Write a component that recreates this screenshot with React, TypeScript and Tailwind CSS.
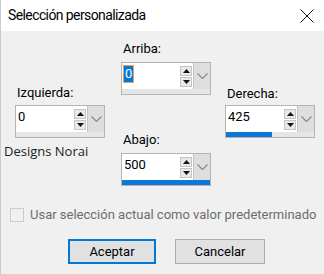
import React from 'react';

type SpinProps = {
  value: string;
  fill: number;
  selected?: boolean;
};

function SpinCombo({ value, fill, selected }: SpinProps) {
  return (
    <div className="w-[90px] h-[33px] border border-[#b4b4b4] bg-white flex flex-col">
      <div className="flex flex-1">
        <div className="flex-1 flex items-start pl-[2px] pt-[3px] text-[13px] leading-[16px] text-black">
          {selected ? (
            <span className="bg-[#0078d7] text-white outline outline-1 outline-[#e8a060] px-[1px]">{value}</span>
          ) : (
            <span>{value}</span>
          )}
        </div>
        <div className="flex flex-col justify-center gap-[1px] mr-[1px]">
          <div className="w-[12px] h-[10px] border border-[#c4c4c4] bg-[#e9e9e9] flex items-center justify-center">
            <svg width="7" height="4" viewBox="0 0 7 4">
              <path d="M0 4 L3.5 0 L7 4 Z" fill="#111" />
            </svg>
          </div>
          <div className="w-[12px] h-[10px] border border-[#c4c4c4] bg-[#e9e9e9] flex items-center justify-center">
            <svg width="7" height="4" viewBox="0 0 7 4">
              <path d="M0 0 L3.5 4 L7 0 Z" fill="#111" />
            </svg>
          </div>
        </div>
        <div className="w-[17px] bg-[#dedede] border-l border-[#c4c4c4] flex items-center justify-center">
          <svg width="11" height="6" viewBox="0 0 11 6">
            <path d="M0.5 0.5 L5.5 5.5 L10.5 0.5" stroke="#8a8a8a" strokeWidth="1.2" fill="none" />
          </svg>
        </div>
      </div>
      <div className="h-[5px] bg-[#e6e6e6]">
        <div className="h-full bg-[#0a78d4]" style={{ width: `${fill}%` }} />
      </div>
    </div>
  );
}

function Label({ children }: { children: React.ReactNode }) {
  return <div className="h-[16px] text-[13px] leading-[16px] text-black pl-[2px]">{children}</div>;
}

export default function App() {
  return (
    <div
      className="w-[324px] h-[274px] bg-[#f0f0f0] border-l border-[#c9c9d3] flex flex-col overflow-hidden"
      style={{ fontFamily: 'Roboto, "Liberation Sans", sans-serif' }}
    >
      <div className="h-[31px] bg-white flex items-center justify-between pl-[7px] pr-[10px]">
        <span className="text-[14px] text-black tracking-[-0.6px]">Selección personalizada</span>
        <svg width="14" height="14" viewBox="0 0 14 14">
          <path d="M0.5 0.5 L13.5 13.5 M13.5 0.5 L0.5 13.5" stroke="#111" strokeWidth="1" />
        </svg>
      </div>

      <div className="flex pl-[14px]">
        <div className="flex flex-col pt-[54px] w-[90px]">
          <Label>Izquierda:</Label>
          <div className="mt-[4px]">
            <SpinCombo value="0" fill={0} />
          </div>
          <div
            className="-ml-[11px] mt-[5px] text-[13px] leading-[16px] text-[#222] whitespace-nowrap"
            style={{ fontFamily: '"Open Sans", sans-serif' }}
          >
            Designs Norai
          </div>
        </div>
        <div className="flex flex-col pt-[10px] w-[90px] ml-[16px]">
          <Label>Arriba:</Label>
          <div className="mt-[5px]">
            <SpinCombo value="0" fill={0} selected />
          </div>
          <div className="mt-[37px]">
            <Label>Abajo:</Label>
          </div>
          <div className="mt-[5px]">
            <SpinCombo value="500" fill={100} />
          </div>
        </div>
        <div className="flex flex-col pt-[55px] w-[90px] ml-[14px]">
          <Label>Derecha:</Label>
          <div className="mt-[3px]">
            <SpinCombo value="425" fill={52} />
          </div>
        </div>
      </div>

      <div className="flex items-center h-[16px] mt-[21px] pl-[9px]">
        <div className="shrink-0 w-[14px] h-[14px] border border-[#cccccc] bg-[#f0f0f0]" />
        <span className="ml-[6px] text-[13px] text-[#6d6d6d] whitespace-nowrap">
          Usar selección actual como valor predeterminado
        </span>
      </div>

      <div className="flex mt-[16px] pl-[67px] gap-[19px]">
        <button className="w-[88px] h-[25px] border-2 border-[#0078d7] bg-[#e1e1e1] text-[13px] text-black">
          Aceptar
        </button>
        <button className="w-[90px] h-[25px] border border-[#adadad] bg-[#e1e1e1] text-[13px] text-black">
          Cancelar
        </button>
      </div>
    </div>
  );
}
